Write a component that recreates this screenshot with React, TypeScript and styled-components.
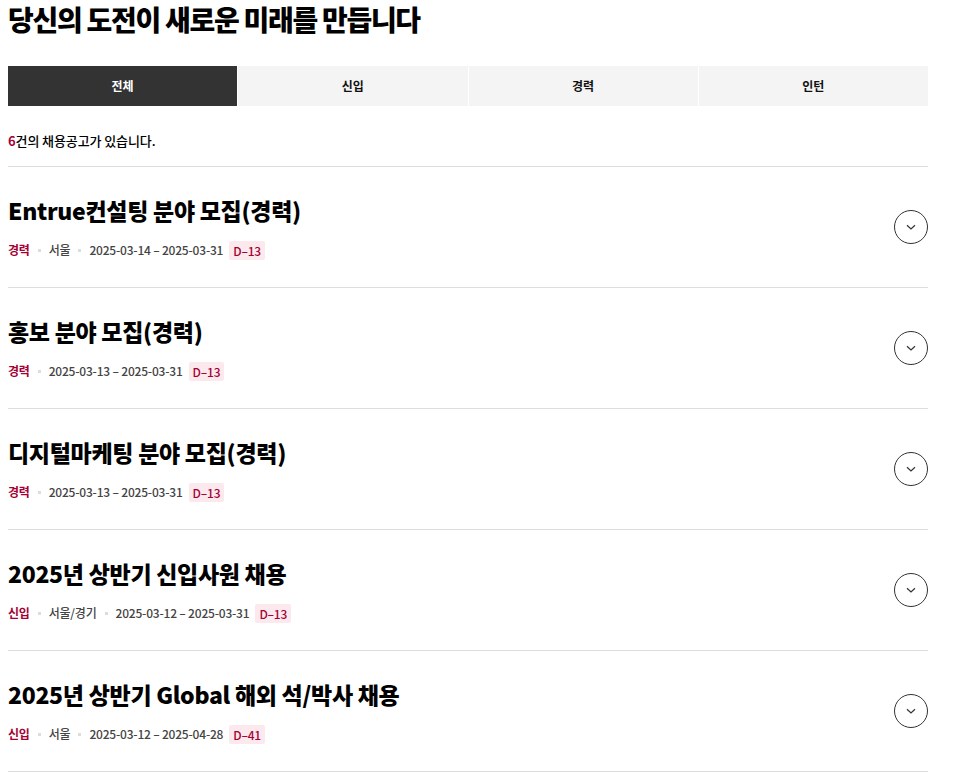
import React from "react";
import styled, { createGlobalStyle } from "styled-components";

interface IJob {
  title: string;
  type: string;
  location?: string;
  start: string;
  end: string;
  dday: string;
}

const jobs: IJob[] = [
  { title: "Entrue컨설팅 분야 모집(경력)", type: "경력", location: "서울", start: "2025-03-14", end: "2025-03-31", dday: "D–13" },
  { title: "홍보 분야 모집(경력)", type: "경력", start: "2025-03-13", end: "2025-03-31", dday: "D–13" },
  { title: "디지털마케팅 분야 모집(경력)", type: "경력", start: "2025-03-13", end: "2025-03-31", dday: "D–13" },
  { title: "2025년 상반기 신입사원 채용", type: "신입", location: "서울/경기", start: "2025-03-12", end: "2025-03-31", dday: "D–13" },
  { title: "2025년 상반기 Global 해외 석/박사 채용", type: "신입", location: "서울", start: "2025-03-12", end: "2025-04-28", dday: "D–41" },
];

const tabs = ["전체", "신입", "경력", "인턴"];

const GlobalStyle = createGlobalStyle`
  body {
    margin: 0;
    background: #fff;
    font-family: "Noto Sans CJK KR", "Noto Sans", sans-serif;
    color: #000;
  }
`;

const Page = styled("div")`
  width: 920px;
  padding: 0 8px;
`;

const Heading = styled("h1")`
  margin: 0;
  font-size: 28px;
  line-height: 38px;
  font-weight: 900;
  letter-spacing: -1.3px;
`;

const TabBar = styled("div")`
  margin-top: 28px;
  display: grid;
  grid-template-columns: repeat(4, 1fr);
  gap: 1px;
`;

const Tab = styled("button")<{ $active?: boolean }>`
  height: 40px;
  border: 0;
  padding: 0 0 2px;
  font-family: inherit;
  font-size: 12px;
  font-weight: 700;
  background: ${(p) => (p.$active ? "#333" : "#f4f4f4")};
  color: ${(p) => (p.$active ? "#fff" : "#111")};
`;

const Count = styled("p")`
  margin: 26px 0 0;
  padding-bottom: 16px;
  font-size: 13px;
  line-height: 18px;
  font-weight: 500;
  letter-spacing: -0.1px;
  border-bottom: 1px solid #ddd;
`;

const Num = styled("span")`
  color: #a50034;
  font-weight: 700;
`;

const Row = styled("div")`
  display: flex;
  align-items: center;
  justify-content: space-between;
  padding: 26px 0 27px;
  border-bottom: 1px solid #ddd;
`;

const Title = styled("h2")`
  margin: 0;
  font-size: 23px;
  line-height: 34px;
  font-weight: 900;
  letter-spacing: -0.3px;
`;

const Meta = styled("div")`
  margin-top: 13px;
  display: flex;
  align-items: center;
  font-size: 12px;
  line-height: 20px;
  font-weight: 500;
  letter-spacing: -0.2px;
  color: #444;
`;

const Type = styled("span")`
  color: #a50034;
  font-weight: 700;
`;

const Dot = styled("span")`
  width: 3px;
  height: 3px;
  margin: 0 8px;
  background: #ddd;
`;

const Dday = styled("span")`
  margin-left: 6px;
  padding: 0 4px;
  border-radius: 2px;
  background: #fbe9ee;
  color: #a50034;
  line-height: 19px;
`;

const Toggle = styled("button")`
  width: 34px;
  height: 34px;
  flex: none;
  padding: 0;
  border: 1px solid #333;
  border-radius: 50%;
  background: #fff;
  display: flex;
  align-items: center;
  justify-content: center;
`;

const Chevron = () => (
  <svg width="12" height="8" viewBox="0 0 12 8" fill="none">
    <path d="M2 2.2l4 3.8 4-3.8" stroke="#333" strokeWidth="1.2" />
  </svg>
);

const Job: React.FC<{ job: IJob }> = ({ job }) => (
  <Row>
    <div>
      <Title>{job.title}</Title>
      <Meta>
        <Type>{job.type}</Type>
        <Dot />
        {job.location && (
          <>
            <span>{job.location}</span>
            <Dot />
          </>
        )}
        <span>
          {job.start} – {job.end}
        </span>
        <Dday>{job.dday}</Dday>
      </Meta>
    </div>
    <Toggle aria-label="열기">
      <Chevron />
    </Toggle>
  </Row>
);

const App: React.FC = () => (
  <Page>
    <GlobalStyle />
    <Heading>당신의 도전이 새로운 미래를 만듭니다</Heading>
    <TabBar>
      {tabs.map((t, i) => (
        <Tab key={t} $active={i === 0}>
          {t}
        </Tab>
      ))}
    </TabBar>
    <Count>
      <Num>6</Num>건의 채용공고가 있습니다.
    </Count>
    {jobs.map((j) => (
      <Job key={j.title} job={j} />
    ))}
  </Page>
);

export default App;
